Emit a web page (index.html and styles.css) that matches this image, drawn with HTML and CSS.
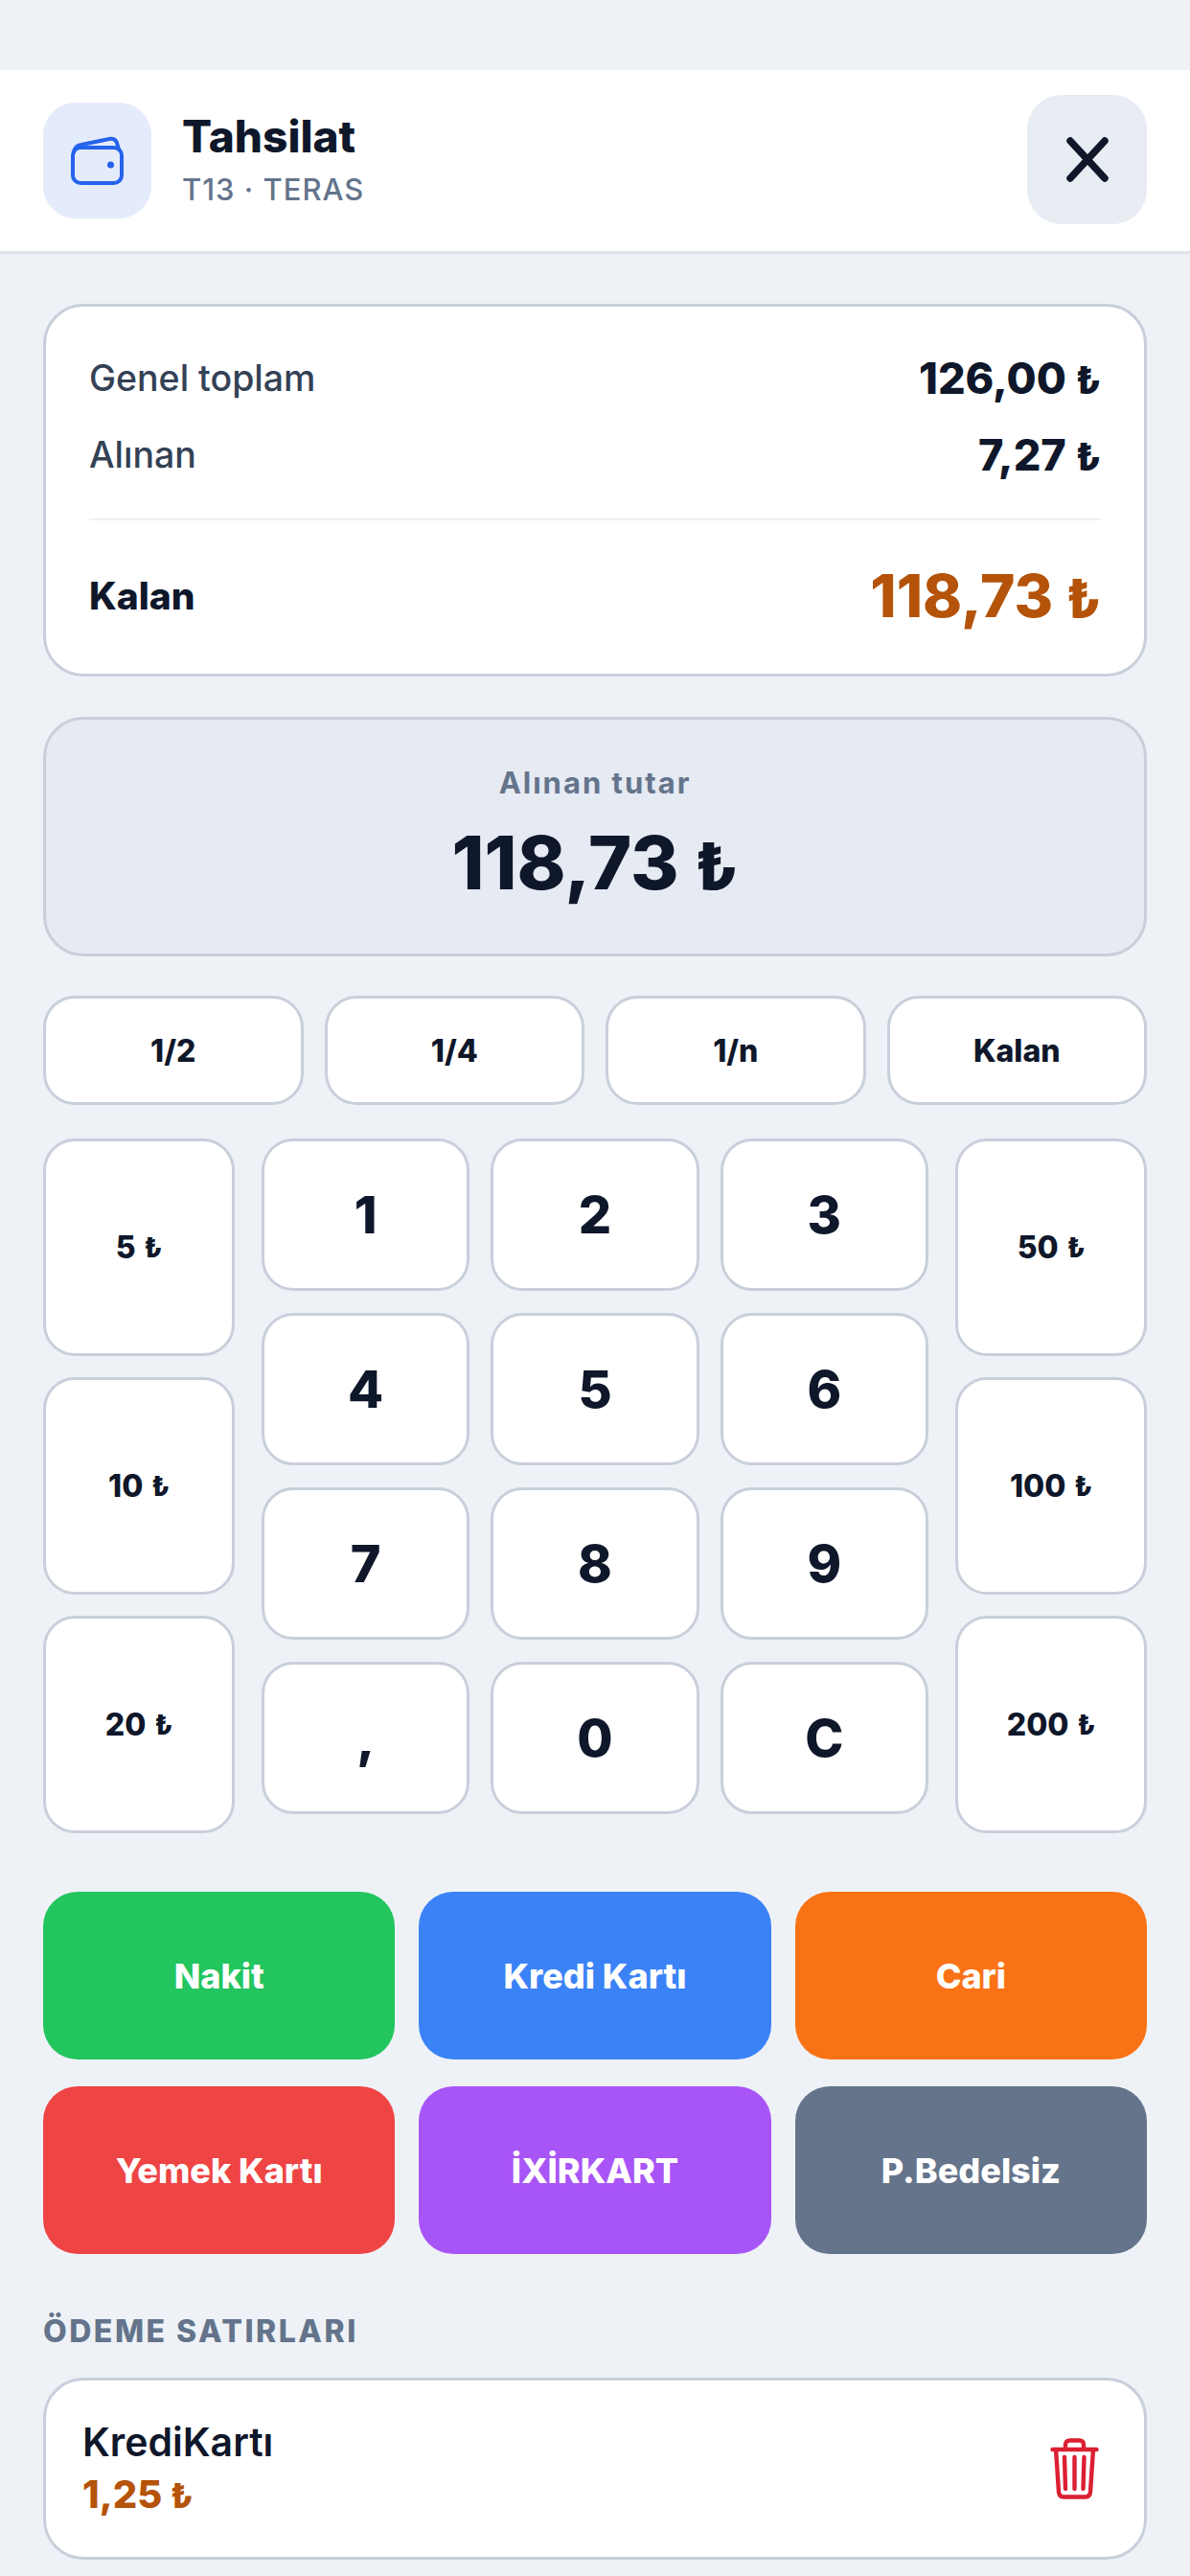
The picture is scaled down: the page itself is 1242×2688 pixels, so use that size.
FILE: index.html
```html
<!DOCTYPE html>
<html lang="tr">
<head>
    <meta charset="UTF-8">
    <title>Tahsilat</title>
    <link rel="stylesheet" href="styles.css">
</head>
<body>
<header class="top">
    <div class="top-icon">
        <svg width="55" height="51" viewBox="0 0 55 51" fill="none" stroke="#2563eb" stroke-width="4" stroke-linecap="round" stroke-linejoin="round">
            <rect x="2" y="12" width="51" height="37" rx="8"/>
            <path d="M3 17 Q4 10 11 9 L40 3 Q46 2 48 7 L50 14"/>
            <circle cx="41.5" cy="30" r="3.5" fill="#2563eb" stroke="none"/>
        </svg>
    </div>
    <div class="top-text">
        <div class="top-title">Tahsilat</div>
        <div class="top-sub">T13 · TERAS</div>
    </div>
    <div class="close">
        <svg width="44" height="47" viewBox="0 0 44 47" fill="none" stroke="#0f172a" stroke-width="7.5" stroke-linecap="round">
            <path d="M4 4 L40 43 M40 4 L4 43"/>
        </svg>
    </div>
</header>

<main class="content">
    <section class="summary">
        <div class="row"><span class="row-label">Genel toplam</span><span class="row-value">126,00 <i>₺</i></span></div>
        <div class="row"><span class="row-label">Alınan</span><span class="row-value">7,27 <i>₺</i></span></div>
        <div class="line"></div>
        <div class="row"><span class="row-label strong">Kalan</span><span class="row-value big">118,73 <i>₺</i></span></div>
    </section>

    <section class="amount">
        <div class="amount-label">Alınan tutar</div>
        <div class="amount-value">118,73 <i>₺</i></div>
    </section>

    <div class="quick">
        <div class="key small">1/2</div>
        <div class="key small">1/4</div>
        <div class="key small">1/n</div>
        <div class="key small">Kalan</div>
    </div>

    <div class="pad">
        <div class="side">
            <div class="key small">5 <i>₺</i></div>
            <div class="key small">10 <i>₺</i></div>
            <div class="key small">20 <i>₺</i></div>
        </div>
        <div class="nums">
            <div class="key num">1</div>
            <div class="key num">2</div>
            <div class="key num">3</div>
            <div class="key num">4</div>
            <div class="key num">5</div>
            <div class="key num">6</div>
            <div class="key num">7</div>
            <div class="key num">8</div>
            <div class="key num">9</div>
            <div class="key num">,</div>
            <div class="key num">0</div>
            <div class="key num">C</div>
        </div>
        <div class="side">
            <div class="key small">50 <i>₺</i></div>
            <div class="key small">100 <i>₺</i></div>
            <div class="key small">200 <i>₺</i></div>
        </div>
    </div>

    <div class="pay">
        <div class="pay-btn green">Nakit</div>
        <div class="pay-btn blue">Kredi Kartı</div>
        <div class="pay-btn orange">Cari</div>
        <div class="pay-btn red">Yemek Kartı</div>
        <div class="pay-btn purple">İXİRKART</div>
        <div class="pay-btn slate">P.Bedelsiz</div>
    </div>

    <h2 class="lines-title">ÖDEME SATIRLARI</h2>

    <div class="line-card">
        <div>
            <div class="line-name">KrediKartı</div>
            <div class="line-amount">1,25 <i>₺</i></div>
        </div>
        <svg width="51" height="64" viewBox="0 0 51 64" fill="none" stroke="#dc1f32" stroke-width="4.4" stroke-linecap="round" stroke-linejoin="round">
            <path d="M2.5 12 H48.5"/>
            <path d="M16 11 V7 Q16 2.5 21 2.5 H30 Q35 2.5 35 7 V11"/>
            <path d="M6 12 L9 56 Q9.5 61.5 14 61.5 H37 Q41.5 61.5 42 56 L45 12"/>
            <path d="M15 20 L16 53 M25.5 20 V53 M35.5 20 L34.5 53"/>
        </svg>
    </div>
</main>
</body>
</html>
```

FILE: styles.css
```css
* {
    margin: 0;
    padding: 0;
    box-sizing: border-box;
}

html, body {
    height: 2688px;
    overflow: hidden;
}

body {
    background-color: #eef2f7;
    font-family: Inter, "Liberation Sans", sans-serif;
    color: #0f172a;
    padding-top: 73px;
}

i {
    font-style: normal;
    font-size: 0.88em;
}

/* ust baslik */
.top {
    height: 192px;
    background-color: #fff;
    border-bottom: 3px solid #dfe3e9;
    padding: 0 45px;
    display: flex;
    align-items: center;
}

.top-icon {
    width: 113px;
    height: 121px;
    border-radius: 34px;
    background-color: #e4ebfb;
    display: flex;
    align-items: center;
    justify-content: center;
}

.top-text {
    margin-left: 32px;
    flex: 1;
}

.top-title {
    font-size: 46px;
    font-weight: 800;
    line-height: 52px;
}

.top-sub {
    font-size: 31px;
    font-weight: 500;
    line-height: 44px;
    letter-spacing: 1px;
    margin-top: 8px;
    color: #64748b;
}

.close {
    width: 125px;
    height: 135px;
    border-radius: 36px;
    background-color: #e8ecf3;
    display: flex;
    align-items: center;
    justify-content: center;
    margin-top: -3px;
}

.content {
    padding: 52px 45px 0;
}

/* ozet */
.summary {
    height: 389px;
    background-color: #fff;
    border: 3px solid #c9cfda;
    border-radius: 42px;
    padding: 34px 45px 0;
}

.row {
    height: 80px;
    display: flex;
    align-items: center;
    justify-content: space-between;
}

.row-label {
    font-size: 37.5px;
    font-weight: 500;
    color: #334155;
}

.row-label.strong {
    font-size: 39px;
    font-weight: 800;
    color: #0f172a;
}

.row-value {
    font-size: 45px;
    font-weight: 800;
}

.row-value.big {
    font-size: 62px;
    color: #b45309;
}

.line {
    height: 2px;
    background-color: #eef0f3;
    margin: 27px 0 38px;
}

.amount {
    height: 250px;
    margin-top: 42px;
    background-color: #e6eaf3;
    border: 3px solid #c9cfda;
    border-radius: 42px;
    text-align: center;
    padding-top: 46px;
}

.amount-label {
    font-size: 31px;
    font-weight: 700;
    letter-spacing: 2px;
    line-height: 40px;
    color: #64748b;
}

.amount-value {
    font-size: 77px;
    font-weight: 800;
    line-height: 100px;
    margin-top: 13px;
}

/* tuslar */
.key {
    background-color: #fff;
    border: 3px solid #c9cfda;
    border-radius: 33px;
    display: flex;
    align-items: center;
    justify-content: center;
    gap: 9px;
    font-weight: 800;
}

.small {
    font-size: 32px;
}

.num {
    font-size: 54px;
    border-radius: 33px;
}

.quick {
    display: grid;
    grid-template-columns: repeat(4, 1fr);
    column-gap: 22px;
    height: 114px;
    margin-top: 41px;
}

.pad {
    display: flex;
    justify-content: space-between;
    margin-top: 35px;
}

.side {
    width: 200px;
    display: grid;
    grid-template-rows: repeat(3, 227px);
    row-gap: 22px;
}

.nums {
    width: 696px;
    height: 705px;
    display: grid;
    grid-template-columns: repeat(3, 1fr);
    grid-template-rows: repeat(4, 159px);
    gap: 23px 22px;
}

/* odeme turleri */
.pay {
    display: grid;
    grid-template-columns: repeat(3, 1fr);
    grid-template-rows: repeat(2, 175px);
    gap: 28px 25px;
    margin-top: 61px;
}

.pay-btn {
    border-radius: 36px;
    color: #fff;
    font-size: 36px;
    font-weight: 800;
    display: flex;
    align-items: center;
    justify-content: center;
}

.green { background-color: #22c55e; }
.blue { background-color: #3b82f6; }
.orange { background-color: #f97316; }
.red { background-color: #ef4444; }
.purple { background-color: #a855f7; }
.slate { background-color: #64748b; }

.lines-title {
    font-size: 32px;
    font-weight: 800;
    letter-spacing: 2.5px;
    line-height: 40px;
    color: #64748b;
    margin-top: 61px;
}

.line-card {
    height: 190px;
    margin-top: 28px;
    background-color: #fff;
    border: 3px solid #c9cfda;
    border-radius: 42px;
    padding: 0 47px 0 38px;
    display: flex;
    align-items: center;
    justify-content: space-between;
}

.line-name {
    font-size: 41px;
    font-weight: 600;
    line-height: 52px;
}

.line-amount {
    font-size: 40px;
    font-weight: 800;
    line-height: 52px;
    margin-top: 3px;
    color: #b45309;
}
```
